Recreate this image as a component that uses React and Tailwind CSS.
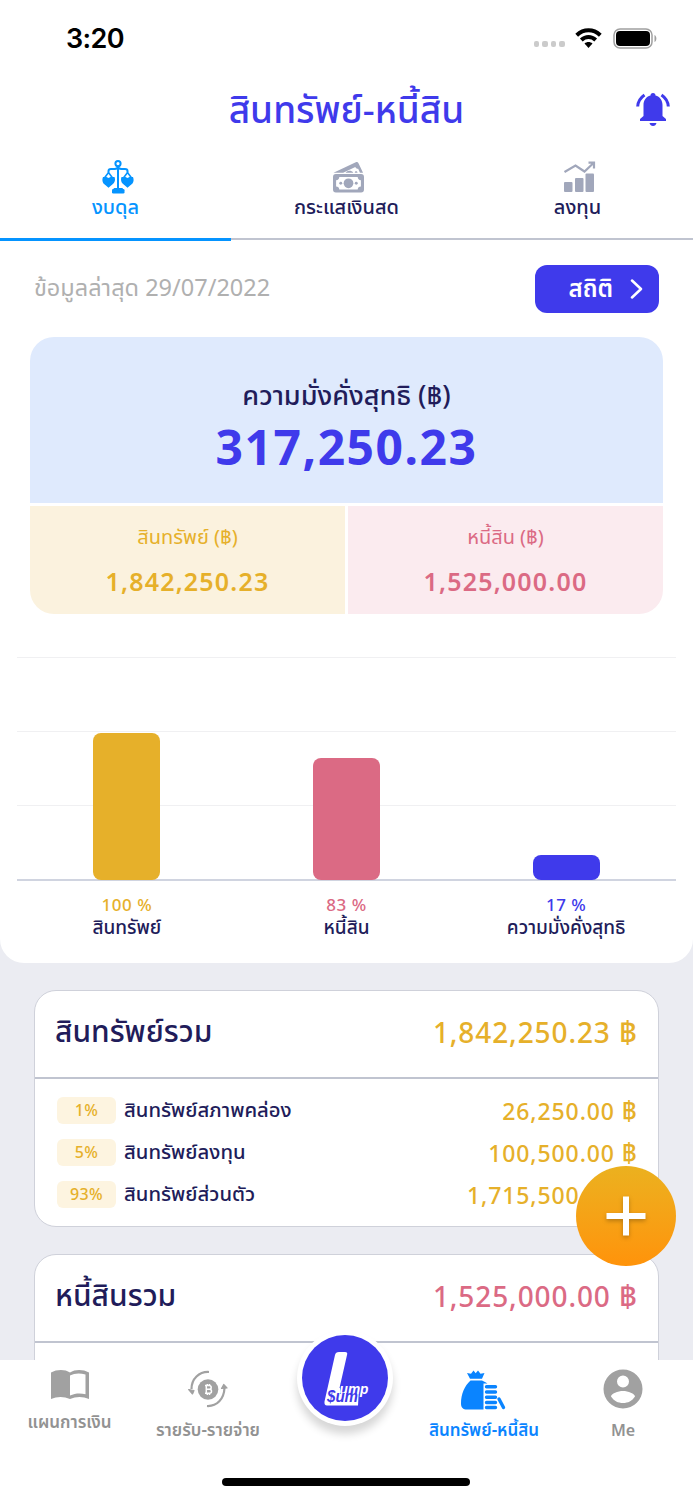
import React from "react";

const tabs = [
  { label: "งบดุล", icon: "scale", active: true },
  { label: "กระแสเงินสด", icon: "cash" },
  { label: "ลงทุน", icon: "growth" },
];

const bars = [
  { label: "สินทรัพย์", percent: 100, height: 147, bar: "bg-[#e6b02a]", text: "text-[#e6b02a]" },
  { label: "หนี้สิน", percent: 83, height: 122, bar: "bg-[#db6a84]", text: "text-[#db6a84]" },
  { label: "ความมั่งคั่งสุทธิ", percent: 17, height: 25, bar: "bg-[#3f3aeb]", text: "text-[#3f3aeb]" },
];

const assets = [
  { percent: "1%", label: "สินทรัพย์สภาพคล่อง", amount: "26,250.00" },
  { percent: "5%", label: "สินทรัพย์ลงทุน", amount: "100,500.00" },
  { percent: "93%", label: "สินทรัพย์ส่วนตัว", amount: "1,715,500.23" },
];

const ScaleIcon = () => (
  <svg width="32" height="34" viewBox="0 0 32 34" fill="none" stroke="#0594ff" strokeWidth="2">
    <circle cx="16" cy="3.6" r="2.6" />
    <path d="M6.5 12.5V11C6.500 9.500 7.500 9 9 9h3.500c2 0 3.500-1 3.500-3 0 2 1.500 3 3.500 3H23c1.500 0 2.500.5 2.500 2v1.500M16 6v24" />
    <path d="M2 18.500l4.500-6 4.500 6M21 18.500l4.500-6 4.500 6" strokeWidth="1.600" />
    <path d="M1 17h3.500l2 1 2-1H12.500c1.200 3 .2 6-2.200 7.500l-3.800 3.200L2.700 24.500C.4 23-.2 20 1 17zM19.500 17h4l2 1 2-1H31c1.200 3 .6 6-1.700 7.500l-3.800 3.200-3.800-3.200c-2.300-1.500-3.400-4.500-2.200-7.500z" fill="#0594ff" stroke="none" />
    <rect x="11.500" y="28" width="9.500" height="3" rx="1" fill="#0594ff" stroke="none" />
    <rect x="10" y="29" width="12.500" height="4.500" rx="1.300" fill="#0594ff" stroke="none" />
  </svg>
);

const CashIcon = () => (
  <svg width="31" height="32" viewBox="0 0 32 32" fill="#a1a7bb">
    <path fillRule="evenodd" d="M0.500 11.500 23.500.8c1.200-.6 2.300-.2 2.800.9L31 11.500h-3.200L26 7.600c-1.400.1-2.400-.5-3-1.800L10.500 11.500z" />
    <path d="M13 11.500c1.500-2.400 6-3 8 0zM22.500 11.500c0-1.800 2.600-1.800 2.800 0z" />
    <path fillRule="evenodd" d="M3 13h26a3 3 0 0 1 3 3v13a3 3 0 0 1-3 3H3a3 3 0 0 1-3-3V16a3 3 0 0 1 3-3zm3.500 3c0 2-1.300 3.300-3.300 3.300v6.400c2 0 3.300 1.300 3.300 3.300h19c0-2 1.300-3.300 3.300-3.300v-6.400c-2 0-3.300-1.300-3.300-3.300z" />
    <circle cx="16" cy="22.500" r="5" />
    <circle cx="8" cy="22.500" r="1.500" />
    <circle cx="24" cy="22.500" r="1.500" />
  </svg>
);

const GrowthIcon = () => (
  <svg width="32" height="32" viewBox="0 0 32 32" fill="#a1a7bb">
    <path d="M.5 11 11.500 4.500l9 6L29 2.500M24.500 1.700H30V7.500" fill="none" stroke="#a1a7bb" strokeWidth="2.200" />
    <rect x="0" y="21" width="8.500" height="10" rx="1" />
    <rect x="11" y="17" width="8.500" height="14" rx="1" />
    <rect x="21.500" y="12.500" width="8.500" height="18.500" rx="1" />
  </svg>
);

const tabIcons = { scale: ScaleIcon, cash: CashIcon, growth: GrowthIcon };

const BellIcon = () => (
  <svg width="34" height="34" viewBox="0 0 34 34" fill="#3f3aeb">
    <path d="M14.500 2.500a2.500 2.500 0 0 1 5 0c4.500 1.200 7 4.800 7 9.500v11l3.500 3V28H4v-2l3.500-3V12C7.500 7.300 10 3.700 14.500 2.500z" />
    <path d="M13.500 30h7c-.5 2-1.700 3-3.500 3s-3-1-3.500-3z" />
    <path d="M8.500 2C4.500 4.700 2 8.500 1.700 13.500M25.500 2c4 2.700 6.500 6.500 6.800 11.500" fill="none" stroke="#3f3aeb" strokeWidth="3" />
  </svg>
);

const BookIcon = () => (
  <svg width="38" height="30" viewBox="0 0 38 30" fill="#a1a1a1">
    <path fillRule="evenodd" d="M0 2.500C6-.8 14-.8 19 2.500c5-3.300 13-3.300 19 0V29c-6-2.700-13-2.700-19 0-6-2.700-13-2.700-19 0zM19 5.500v20c5-2.500 11-2.500 15.500-1.300V4.500C29 2.800 23.500 3 19 5.500z" />
  </svg>
);

const ExchangeIcon = () => (
  <svg width="40" height="38" viewBox="0 0 40 38">
    <path d="M21 2C11 1.500 3.500 9 3.500 19M19 36c10 .5 17-7 17.500-18" fill="none" stroke="#a1a1a1" strokeWidth="2.200" />
    <path d="M.7 19.500 6 20.500l-1.500 3.500zM33.500 18.500l5.500-.5-3.300-3.500z" fill="#a1a1a1" stroke="#a1a1a1" strokeWidth="1.200" strokeLinejoin="round" />
    <circle cx="20" cy="19.500" r="10.300" fill="#a1a1a1" />
    <path d="M18.300 15.500h3a1.800 1.800 0 0 1 0 3.800h-3zM18.300 19.300h3.200a2 2 0 0 1 0 4h-3.200zM17 15.500h2M17 23.300h2M19.300 14v1.500M21.500 14v1.500M19.300 23.400v1.500M21.500 23.400v1.500" fill="none" stroke="#fff" strokeWidth="1.500" />
  </svg>
);

const MoneyBagIcon = () => (
  <svg width="46" height="40" viewBox="0 0 46 40" fill="#0a84ff">
    <path d="M6 3l4 .8L12.500 .5l2.200 2.700L17 .5l2.500 3.300 4-.8L21 8.700H9z" />
    <path d="M9.500 10.500H21c2 .8 4 2 5.500 3h-4v26H6C2 39.500 0 37.500 0 33.500 0 24 3.500 16 9.500 10.500z" />
    <path d="M25.500 16.700h9M25.500 22h9M25.500 27.200h9M25.500 32.500h9M25.500 37.500h9M38 29l4.500 8.500" stroke="#0a84ff" strokeWidth="3.400" strokeLinecap="round" />
  </svg>
);

const UserIcon = () => (
  <svg width="40" height="40" viewBox="0 0 40 40" fill="#a1a1a1">
    <path fillRule="evenodd" d="M20 .5a19.500 19.500 0 1 1 0 39 19.500 19.500 0 0 1 0-39zm0 6a6 6 0 1 0 0 12 6 6 0 0 0 0-12zm0 15.500c-5 0-12 2.500-12 5.500 3 4.500 7 6.500 12 6.500s9-2 12-6.500c0-3-7-5.500-12-5.500z" />
  </svg>
);

const StatusBar = () => (
  <div className="flex h-[76px] items-center justify-between pr-9 pl-[66px]">
    <span className="pt-[2px] font-['Inter',sans-serif] text-[27px] font-semibold tracking-[-0.6px] text-black">3:20</span>
    <div className="flex items-center">
      <div className="mt-3 mr-[10px] flex gap-[3px]">
        {[0, 1, 2, 3].map((dot) => (
          <span key={dot} className="h-[6px] w-[5.6px] rounded-[2px] bg-[#cbcbcb]" />
        ))}
      </div>
      <svg width="27" height="20" viewBox="0 0 27 20" fill="none" stroke="#000" strokeWidth="4">
        <path d="M1.700 7.300c7-6.600 16.600-6.600 23.600 0M6.300 12c4.300-4 10.100-4 14.400 0" />
        <path d="M13.500 20l4-4.500c-2.300-2-5.700-2-8 0z" fill="#000" stroke="none" />
      </svg>
      <svg className="ml-[11px]" width="44" height="21" viewBox="0 0 44 21">
        <rect x="1" y="1" width="38" height="19" rx="6" fill="none" stroke="#a0a0a0" strokeWidth="1.500" />
        <rect x="3" y="3" width="34" height="15" rx="4" />
        <path d="M41.500 7c2.500 1 2.500 6 0 7z" fill="#a0a0a0" />
      </svg>
    </div>
  </div>
);

const Tabs = () => (
  <div className="flex h-[99px]">
    {tabs.map((tab) => {
      const Icon = tabIcons[tab.icon];
      return (
        <div
          key={tab.label}
          className={
            tab.active
              ? "flex flex-1 flex-col items-center border-b-[3px] border-[#0594ff] pt-[18px] text-[#0594ff]"
              : "mb-px flex flex-1 flex-col items-center border-b-2 border-[#c0c4d0] pt-[18px] text-[#211c5a]"
          }
        >
          <div className="ml-1 flex h-[33px] items-center">
            <Icon />
          </div>
          <span className="text-[20px] leading-[28px] font-medium">{tab.label}</span>
        </div>
      );
    })}
  </div>
);

const Summary = () => (
  <div className="mx-[30px] flex h-[277px] flex-col gap-[3px] overflow-hidden rounded-[24px]">
    <div className="flex h-[166px] flex-col items-center bg-[#dfeafd] pt-[39px]">
      <span className="text-[27px] leading-[38px] font-medium text-[#211c5a]">ความมั่งคั่งสุทธิ (฿)</span>
      <span className="text-[48px] leading-[66px] font-bold tracking-[1.500px] text-[#3f3aeb]">317,250.23</span>
    </div>
    <div className="flex flex-1 gap-[3px]">
      <div className="flex flex-1 flex-col items-center bg-[#fbf2de] pt-[16px] text-[#e6b02a]">
        <span className="text-[20px] leading-[30px]">สินทรัพย์ (฿)</span>
        <span className="mt-[11px] text-[25px] leading-[36px] font-semibold tracking-[1.200px]">1,842,250.23</span>
      </div>
      <div className="flex flex-1 flex-col items-center bg-[#fbebef] pt-[16px] text-[#db6a84]">
        <span className="text-[20px] leading-[30px]">หนี้สิน (฿)</span>
        <span className="mt-[11px] text-[25px] leading-[36px] font-semibold tracking-[1.200px]">1,525,000.00</span>
      </div>
    </div>
  </div>
);

const Chart = () => (
  <div className="mx-[17px] mt-[43px]">
    <div className="relative h-[224px] border-b-2 border-[#d0d4e0]">
      <div className="flex h-full flex-col">
        <div className="h-[74px] border-t border-[#f0f0f2]" />
        <div className="h-[74px] border-t border-[#f0f0f2]" />
        <div className="h-[74px] border-t border-[#f0f0f2]" />
      </div>
      <div className="absolute inset-x-0 top-0 -bottom-px flex items-end">
        {bars.map((bar) => (
          <div key={bar.label} className="flex flex-1 justify-center">
            <div className={`w-[67px] rounded-[8px] ${bar.bar}`} style={{ height: bar.height }} />
          </div>
        ))}
      </div>
    </div>
    <div className="flex pt-[13px]">
      {bars.map((bar) => (
        <div key={bar.label} className="flex flex-1 flex-col items-center">
          <span className={`text-[17px] leading-[21px] font-medium tracking-[0.5px] ${bar.text}`}>{bar.percent} %</span>
          <span className="text-[19px] leading-[24px] font-medium text-[#211c5a]">{bar.label}</span>
        </div>
      ))}
    </div>
  </div>
);

const TotalCard = ({ title, amount, color, items }) => (
  <div className="mx-[34px] h-[237px] shrink-0 rounded-[22px] border border-[#cfd1da] bg-white">
    <div className="flex h-[88px] items-center justify-between border-b-2 border-[#c0c4d0] pr-[21px] pb-1 pl-[20px]">
      <span className="pb-[3px] text-[30px] font-medium text-[#211c5a]">{title}</span>
      <span className={`pb-px text-[28px] font-medium tracking-[0.9px] ${color}`}>
        {amount} <span className="text-[31px] leading-none tracking-normal">฿</span>
      </span>
    </div>
    <div className="flex flex-col pt-[10px]">
      {items.map((item) => (
        <div key={item.label} className="flex h-[42px] items-center pr-[21px] pl-[22px]">
          <span className="flex h-[27px] w-[59px] items-center justify-center rounded-[6px] bg-[#fdf4e0] pb-px text-[16px] font-medium tracking-[0.3px] text-[#e6b02a]">
            {item.percent}
          </span>
          <span className="ml-2 pb-[2px] text-[20.300px] font-medium text-[#211c5a]">{item.label}</span>
          <span className="ml-auto pt-[3px] text-[23px] font-medium tracking-[0.9px] text-[#e6b02a]">
            {item.amount} <span className="text-[26px] leading-none tracking-normal">฿</span>
          </span>
        </div>
      ))}
    </div>
  </div>
);

const Logo = () => (
  <div className="absolute -top-[30px] left-[297px] flex size-[96px] items-center justify-center rounded-full bg-white shadow-[0_8px_8px_rgba(0,0,0,0.16)]">
    <div className="size-[86px] rounded-full bg-[#3f3aeb]">
      <svg width="86" height="86" viewBox="0 0 86 86" fontFamily="Liberation Sans, sans-serif" fontWeight="700" fontStyle="italic">
        <path d="M37 17h6q3 0 2 3l-7.500 33H57l-1 17.500H25q-3 0-2.500-4l10.500-46.500q.6-3 4-3z" fill="#fff" />
        <path d="M38 53h22l-3 6H38z" fill="#3f3aeb" />
        <text x="37.500" y="59" fontSize="15" textLength="29" lengthAdjust="spacingAndGlyphs" fill="#fff">ump</text>
        <text x="25" y="66.500" fontSize="16.500" textLength="31" lengthAdjust="spacingAndGlyphs" fill="#3f3aeb">$um</text>
      </svg>
    </div>
  </div>
);

const BottomNav = () => (
  <div className="relative h-[140px] shrink-0 bg-white">
    <div className="flex text-[17px] leading-[24px] font-semibold text-[#929292]">
      <div className="flex w-[139px] flex-col items-center pt-[10px]">
        <BookIcon />
        <span className="mt-[10px]">แผนการเงิน</span>
      </div>
      <div className="flex w-[138px] flex-col items-center pt-[10px]">
        <ExchangeIcon />
        <span className="mt-[10px]">รายรับ-รายจ่าย</span>
      </div>
      <div className="w-[138px]" />
      <div className="flex w-[138px] flex-col items-center pt-[10px] text-[#0a84ff]">
        <MoneyBagIcon />
        <span className="mt-[8px]">สินทรัพย์-หนี้สิน</span>
      </div>
      <div className="flex w-[140px] flex-col items-center pt-[9px]">
        <UserIcon />
        <span className="mt-[9px] text-[16px]">Me</span>
      </div>
    </div>
    <Logo />
    <div className="absolute bottom-[14px] left-[222px] h-[8px] w-[248px] rounded-full bg-black" />
  </div>
);

const App = () => {
  return (
    <div className="relative flex h-[1500px] w-[693px] flex-col overflow-hidden bg-[#ebecf2] font-['Noto_Sans','Noto_Sans_Thai',sans-serif]">
      <div className="flex min-h-0 flex-1 flex-col overflow-hidden">
        <div className="h-[963px] shrink-0 rounded-b-[24px] bg-white">
          <StatusBar />
          <div className="grid h-[66px] grid-cols-[1fr_auto_1fr] items-center">
            <h1 className="col-start-2 pb-px text-[37px] leading-[60px] font-medium text-[#3f3aeb]">สินทรัพย์-หนี้สิน</h1>
            <div className="mt-[2px] mr-[23px] justify-self-end">
              <BellIcon />
            </div>
          </div>
          <Tabs />
          <div className="flex h-[96px] items-center justify-between px-[34px]">
            <span className="pb-[2px] text-[23.500px] text-[#b0b0b0]">ข้อมูลล่าสุด 29/07/2022</span>
            <button className="flex h-[48px] w-[124px] items-center justify-end gap-[17px] rounded-[12px] bg-[#3f3aeb] pr-[16px] text-[24px] font-semibold text-white">
              <span className="pb-[3px]">สถิติ</span>
              <svg width="13" height="20" viewBox="0 0 13 20" fill="none" stroke="#fff" strokeWidth="2.500" strokeLinecap="round" strokeLinejoin="round">
                <path d="M2 1.500 11 10 2 18.500" />
              </svg>
            </button>
          </div>
          <Summary />
          <Chart />
        </div>
        <div className="mt-[27px] flex flex-col gap-[27px]">
          <TotalCard title="สินทรัพย์รวม" amount="1,842,250.23" color="text-[#e6b02a]" items={assets} />
          <TotalCard title="หนี้สินรวม" amount="1,525,000.00" color="text-[#db6a84]" items={[]} />
        </div>
      </div>
      <button className="absolute top-[1166px] left-[576px] flex size-[100px] items-center justify-center rounded-full bg-linear-to-b from-[#ebb11f] to-[#ff930a]">
        <svg className="drop-shadow-[0_2px_2px_rgba(0,0,0,0.25)]" width="40" height="40" viewBox="0 0 40 40" stroke="#fff" strokeWidth="6">
          <path d="M20 .5v39M.5 20h39" />
        </svg>
      </button>
      <BottomNav />
    </div>
  );
};

export default App;
